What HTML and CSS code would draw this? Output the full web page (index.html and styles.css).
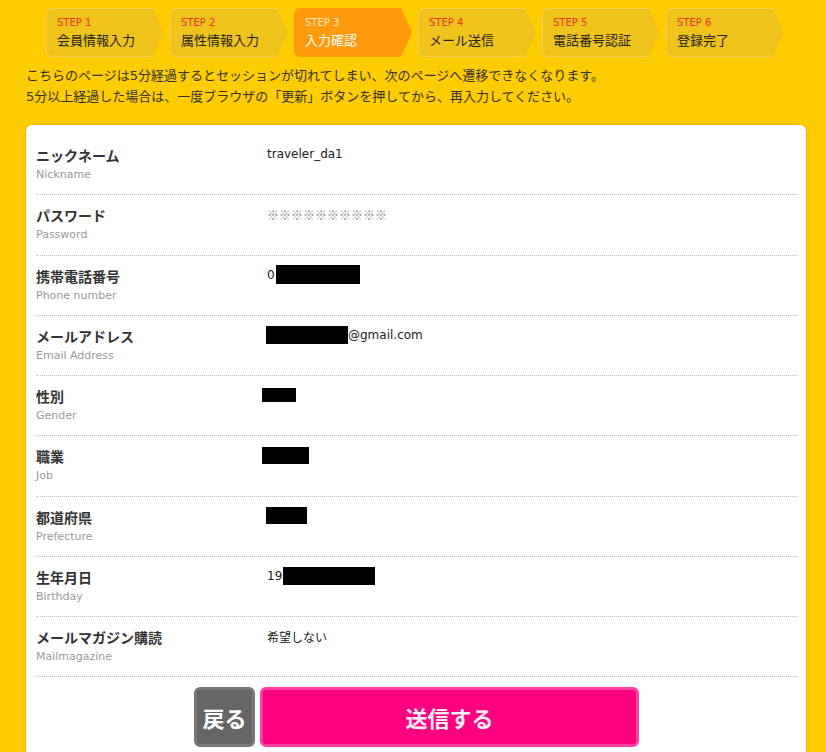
FILE: index.html
```html
<!DOCTYPE html>
<html lang="ja">
  <head>
    <meta charset="UTF-8" />
    <meta name="viewport" content="width=device-width, initial-scale=1.0" />
    <title>入力確認</title>
    <link rel="stylesheet" href="styles.css">
  </head>
  <body>
    <div id="page">
      <ol class="steps">
        <li class="step"><span class="step-num">STEP 1</span><span class="step-name">会員情報入力</span></li>
        <li class="step"><span class="step-num">STEP 2</span><span class="step-name">属性情報入力</span></li>
        <li class="step current"><span class="step-num">STEP 3</span><span class="step-name">入力確認</span></li>
        <li class="step"><span class="step-num">STEP 4</span><span class="step-name">メール送信</span></li>
        <li class="step"><span class="step-num">STEP 5</span><span class="step-name">電話番号認証</span></li>
        <li class="step"><span class="step-num">STEP 6</span><span class="step-name">登録完了</span></li>
      </ol>

      <p class="notice">
        こちらのページは5分経過するとセッションが切れてしまい、次のページへ遷移できなくなります。<br />
        5分以上経過した場合は、一度ブラウザの「更新」ボタンを押してから、再入力してください。
      </p>

      <div id="card">
        <dl class="confirm">
          <div class="row">
            <dt><span class="jp">ニックネーム</span><span class="en">Nickname</span></dt>
            <dd>traveler_da1</dd>
          </div>
          <div class="row">
            <dt><span class="jp">パスワード</span><span class="en">Password</span></dt>
            <dd class="secret">※※※※※※※※※※</dd>
          </div>
          <div class="row">
            <dt><span class="jp">携帯電話番号</span><span class="en">Phone number</span></dt>
            <dd>0<span class="mask mask-phone"></span></dd>
          </div>
          <div class="row">
            <dt><span class="jp">メールアドレス</span><span class="en">Email Address</span></dt>
            <dd><span class="mask mask-mail"></span>@gmail.com</dd>
          </div>
          <div class="row">
            <dt><span class="jp">性別</span><span class="en">Gender</span></dt>
            <dd><span class="mask mask-gender"></span></dd>
          </div>
          <div class="row">
            <dt><span class="jp">職業</span><span class="en">Job</span></dt>
            <dd><span class="mask mask-job"></span></dd>
          </div>
          <div class="row">
            <dt><span class="jp">都道府県</span><span class="en">Prefecture</span></dt>
            <dd><span class="mask mask-pref"></span></dd>
          </div>
          <div class="row">
            <dt><span class="jp">生年月日</span><span class="en">Birthday</span></dt>
            <dd>19<span class="mask mask-birth"></span></dd>
          </div>
          <div class="row">
            <dt><span class="jp">メールマガジン購読</span><span class="en">Mailmagazine</span></dt>
            <dd>希望しない</dd>
          </div>
        </dl>

        <div class="buttons">
          <button type="button" class="btn-back">戻る</button>
          <button type="submit" class="btn-send">送信する</button>
        </div>
      </div>
    </div>
  </body>
</html>
```

FILE: styles.css
```css
body {
  margin: 0;
  background-color: #ffcc00;
  font-family: "DejaVu Sans", "Noto Sans CJK JP", sans-serif;
  color: #222;
}
#page {
  padding: 8px 20px 0 26px;
}

/* step bar */
.steps {
  display: flex;
  gap: 5px;
  margin: 0 0 0 20px;
  padding: 0;
  list-style: none;
}
.step {
  display: flex;
  flex-direction: column;
  width: 119px;
  height: 49px;
  box-sizing: border-box;
  padding: 8px 0 0 11px;
  background-color: #f0c21c;
  border-radius: 6px 0 0 6px;
  box-shadow: inset 1px 1px 0 rgba(255, 255, 255, 0.25), inset 0 -1px 0 rgba(255, 255, 255, 0.25);
  clip-path: polygon(0 0, 107px 0, 118px 50%, 107px 100%, 0 100%);
}
.step-num {
  font-size: 10px;
  line-height: 14px;
  color: #e8321e;
}
.step-name {
  font-family: "Noto Sans CJK JP", sans-serif;
  font-size: 13px;
  line-height: 20px;
  color: #222;
}
.step.current {
  background-color: #ff9a0c;
  box-shadow: none;
}
.step.current .step-num {
  color: #ffe6c4;
}
.step.current .step-name {
  color: #fff;
}

.notice {
  margin: 8px 0 18px;
  font-size: 13px;
  line-height: 21px;
  color: #333;
}

/* confirm card */
#card {
  background-color: white;
  border-radius: 6px;
  box-shadow: 0 0 2px rgba(140, 100, 0, 0.6);
  padding: 10px 9px 30px 10px;
}
.confirm {
  margin: 0;
}
.row {
  display: flex;
  padding: 11px 0 8.25px;
  border-bottom: 1px dotted #bbb;
}
.row dt {
  display: flex;
  flex-direction: column;
  width: 231px;
}
.row .jp {
  font-family: "Noto Sans CJK JP", sans-serif;
  font-weight: bold;
  font-size: 14px;
  line-height: 18px;
  color: #333;
}
.row .en {
  font-size: 11px;
  line-height: 22px;
  color: #999;
}
.row dd {
  display: flex;
  align-items: center;
  height: 18px;
  margin: -1px 0 0;
  font-size: 12px;
}
.row dd.secret {
  color: #8a8a8a;
  font-family: "Noto Sans CJK JP", sans-serif;
}
.mask {
  display: block;
  background-color: black;
}
.mask-phone { width: 84px; height: 19px; margin-left: 1px; }
.mask-mail { width: 82px; height: 18px; margin-left: -1px; }
.mask-gender { width: 34px; height: 14px; margin-left: -5px; }
.mask-job { width: 47px; height: 17px; margin-left: -5px; }
.mask-pref { width: 41px; height: 17px; margin-left: -1px; }
.mask-birth { width: 92px; height: 18px; margin-left: 1px; }

/* buttons */
.buttons {
  display: flex;
  justify-content: center;
  gap: 5px;
  margin-top: 10px;
}
.buttons button {
  height: 60px;
  border-radius: 6px;
  font-family: "Noto Sans CJK JP", sans-serif;
  font-weight: bold;
  font-size: 22px;
  cursor: pointer;
}
.btn-back {
  width: 61px;
  padding: 0;
  background-color: #666;
  border: 3px solid #787878;
  color: #fff;
}
.btn-send {
  width: 379px;
  background-color: #ff0080;
  border: 3px solid #ff40a0;
  color: #ffeef6;
}
```
